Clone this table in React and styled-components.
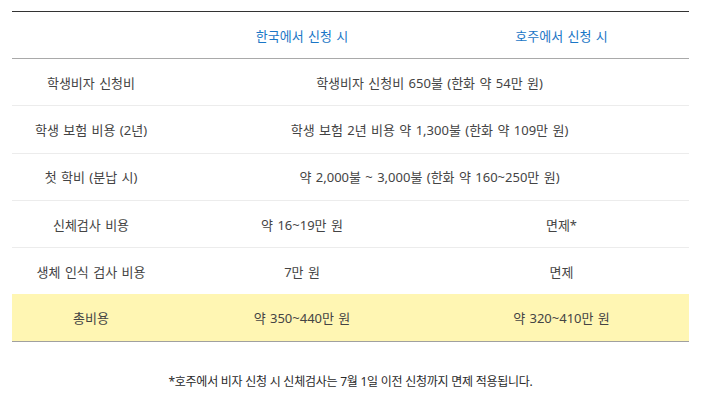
import React from "react";
import styled, { createGlobalStyle } from "styled-components";

//--------------------------------------------

const GlobalStyle = createGlobalStyle`
  body {
    margin: 0;
    background: #ffffff;
    font-family: "Noto Sans", "Noto Sans CJK KR", sans-serif;
  }
`;

const rows = [
  { label: "학생비자 신청비", span: "학생비자 신청비 650불 (한화 약 54만 원)" },
  { label: "학생 보험 비용 (2년)", span: "학생 보험 2년 비용 약 1,300불 (한화 약 109만 원)" },
  { label: "첫 학비 (분납 시)", span: "약 2,000불 ~ 3,000불 (한화 약 160~250만 원)" },
  { label: "신체검사 비용", kr: "약 16~19만 원", au: "면제*" },
  { label: "생체 인식 검사 비용", kr: "7만 원", au: "면제" },
];

const App = () => {
  return (
    <>
      <GlobalStyle />
      <StyledWrap>
        <StyledTable>
          <colgroup>
            <col style={{ width: "158px" }} />
            <col style={{ width: "264px" }} />
            <col />
          </colgroup>
          <thead>
            <tr>
              <StyledHead />
              <StyledHead>한국에서 신청 시</StyledHead>
              <StyledHead>호주에서 신청 시</StyledHead>
            </tr>
          </thead>
          <tbody>
            {rows.map((row) => (
              <StyledRow key={row.label}>
                <StyledCell>{row.label}</StyledCell>
                {row.span ? (
                  <StyledCell colSpan={2}>{row.span}</StyledCell>
                ) : (
                  <>
                    <StyledCell>{row.kr}</StyledCell>
                    <StyledCell>{row.au}</StyledCell>
                  </>
                )}
              </StyledRow>
            ))}
            <StyledRow total>
              <StyledCell>총비용</StyledCell>
              <StyledCell>약 350~440만 원</StyledCell>
              <StyledCell>약 320~410만 원</StyledCell>
            </StyledRow>
          </tbody>
        </StyledTable>
        <StyledNote>*호주에서 비자 신청 시 신체검사는 7월 1일 이전 신청까지 면제 적용됩니다.</StyledNote>
      </StyledWrap>
    </>
  );
};

export default App;

//----------------------------------------------

const StyledWrap = styled.div`
  padding: 11px 12px 0 12px;
  width: 677px;
`;

const StyledTable = styled.table`
  width: 100%;
  border-collapse: collapse;
  table-layout: fixed;
  border-top: 1px solid #333333;
  border-bottom: 1px solid #a0a0a0;
`;

const StyledHead = styled.th`
  height: 46px;
  padding: 0;
  font-size: 13px;
  font-weight: 400;
  word-spacing: 1px;
  color: #1a76c6;
  text-align: center;
  border-bottom: 1px solid #a9a9a9;
`;

const StyledRow = styled.tr`
  background: ${(props) => (props.total ? "#fff6b3" : "transparent")};
  & + & td {
    border-top: 1px solid #ececec;
  }
`;

const StyledCell = styled.td`
  height: 46.3px;
  padding: 0;
  font-size: 13px;
  word-spacing: 1px;
  color: #444444;
  text-align: center;
`;

const StyledNote = styled.p`
  margin: 30px 0 0;
  font-size: 12px;
  color: #2a2a2a;
  text-align: center;
  letter-spacing: -0.25px;
`;
